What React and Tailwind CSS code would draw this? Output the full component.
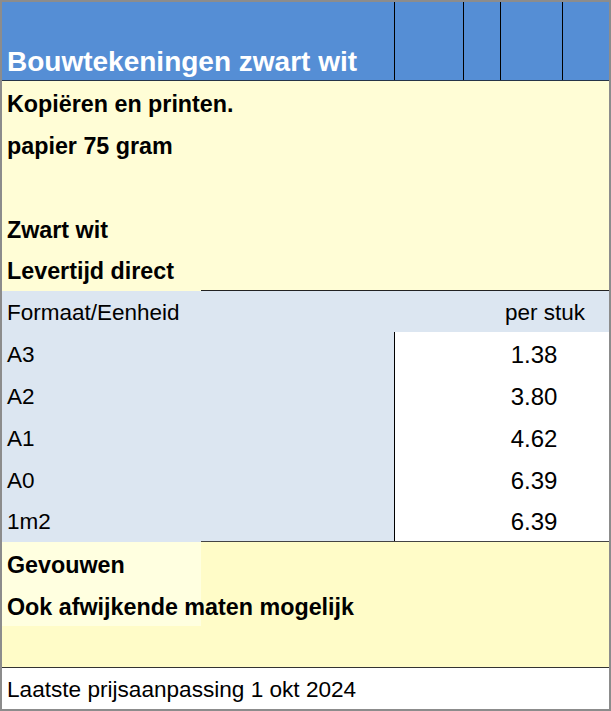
import React from "react";

const Y = "bg-[#fffdd6]";
const YL = "bg-[#ffffe0]";
const B = "bg-[#dce6f1]";

export default function App() {
  const prices = [
    ["A3", "1.38", "h-[42px]"],
    ["A2", "3.80", "h-[42px]"],
    ["A1", "4.62", "h-[42px]"],
    ["A0", "6.39", "h-[42px]"],
    ["1m2", "6.39", "h-[41px]"],
  ];
  return (
    <div className="w-[611px] h-[711px] border-2 border-[#8c8c8c] bg-white font-['Liberation_Sans',Arial,sans-serif] text-black flex flex-col overflow-hidden">
      {/* header */}
      <div className="flex h-[79px] shrink-0 bg-[#558ed5] border-b border-[#263447]">
        <div className="w-[392px] flex items-end pl-[5px] pb-[2px]">
          <span className="text-white font-bold text-[28px] leading-[32px]">Bouwtekeningen zwart wit</span>
        </div>
        <div className="w-[69px] border-l border-black" />
        <div className="w-[37px] border-l border-black" />
        <div className="w-[62px] border-l border-black" />
        <div className="flex-1 border-l border-black" />
      </div>

      {/* yellow top */}
      <div className={`${Y} flex flex-col font-bold text-[23.3px] leading-[26px]`}>
        <div className="h-[42px] flex items-center pl-[5px] pt-[3px]">Kopiëren en printen.</div>
        <div className="h-[42px] flex items-center pl-[5px] pt-[3px]">papier 75 gram</div>
        <div className="h-[42px]" />
        <div className="h-[42px] flex items-center pl-[5px] pt-[3px]">Zwart wit</div>
        <div className="h-[41px] flex items-center pl-[5px] pt-[3px]">Levertijd direct</div>
      </div>
      <div className="flex h-[1px] shrink-0">
        <div className={`w-[199px] ${Y}`} />
        <div className="flex-1 bg-[#222]" />
      </div>

      {/* table */}
      <div className={`${B} flex flex-col text-[22.5px] leading-[26px]`}>
        <div className="h-[41px] flex items-center pt-[3px]">
          <div className="flex-1 pl-[5px]">Formaat/Eenheid</div>
          <div className="w-[220px] text-right pr-[24px]">per stuk</div>
        </div>
        {prices.map(([k, v, h]) => (
          <div key={k} className={`${h} flex`}>
            <div className="flex-1 pl-[5px] flex items-center pt-[3px]">{k}</div>
            <div className="w-[215px] bg-white border-l border-black flex items-center pt-[3px]">
              <span className="w-[140px] ml-auto text-center pr-[10px] text-[24px]">{v}</span>
            </div>
          </div>
        ))}
      </div>
      <div className="flex h-[1px] shrink-0">
        <div className={`w-[199px] ${B}`} />
        <div className="flex-1 bg-[#444]" />
      </div>

      {/* yellow bottom */}
      <div className="flex flex-col font-bold text-[23.3px] leading-[26px] bg-[#fffcc8] border-b border-[#333]">
        <div className="h-[42px] flex items-center">
          <div className={`w-[199px] h-full ${YL} flex items-center pl-[5px] pt-[3px]`}>Gevouwen</div>
        </div>
        <div className="h-[42px] flex items-center relative">
          <div className={`w-[199px] h-full ${YL}`} />
          <span className="absolute left-[5px] top-[10px]">Ook afwijkende maten mogelijk</span>
        </div>
        <div className="h-[41px]" />
      </div>

      {/* footer */}
      <div className="h-[41px] flex items-center pl-[5px] pt-[3px] text-[22.6px] leading-[26px] bg-white">
        Laatste prijsaanpassing 1 okt 2024
      </div>
    </div>
  );
}
